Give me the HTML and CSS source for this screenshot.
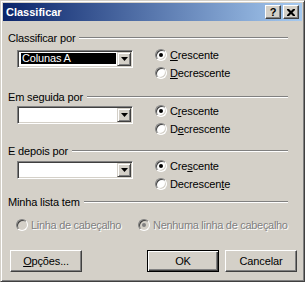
FILE: index.html
```html
<!DOCTYPE html>
<html lang="pt">
<head>
<meta charset="utf-8">
<title>Classificar</title>
<link rel="stylesheet" href="styles.css">
</head>
<body>
<div class="window">
  <div class="titlebar">
    <span class="title">Classificar</span>
    <div class="cap-btns">
      <div class="cap-btn help">?</div>
      <div class="cap-btn close">
        <svg width="8" height="7" viewBox="0 0 8 7"><path d="M0 0h2l2 2 2-2h2v1l-2.5 2.5 2.5 2.5v1h-2l-2-2-2 2h-2v-1l2.5-2.5-2.5-2.5z" fill="#000"/></svg>
      </div>
    </div>
  </div>
  <div class="content">
    <section class="group g1">
      <div class="legend"><span>Classificar por</span><i class="etch"></i></div>
      <div class="row">
        <div class="combo">
          <div class="field"><span class="sel">Colunas A</span></div>
          <div class="drop"><svg width="7" height="4" viewBox="0 0 7 4"><path d="M0 0h7l-3.5 4z" fill="#000"/></svg></div>
        </div>
        <div class="radios">
          <div class="radio"><span class="dot on"></span><span><u>C</u>rescente</span></div>
          <div class="radio"><span class="dot"></span><span><u>D</u>ecrescente</span></div>
        </div>
      </div>
    </section>
    <section class="group g2">
      <div class="legend"><span>Em seguida por</span><i class="etch"></i></div>
      <div class="row">
        <div class="combo">
          <div class="field"></div>
          <div class="drop"><svg width="7" height="4" viewBox="0 0 7 4"><path d="M0 0h7l-3.5 4z" fill="#000"/></svg></div>
        </div>
        <div class="radios">
          <div class="radio"><span class="dot on"></span><span>C<u>r</u>escente</span></div>
          <div class="radio"><span class="dot"></span><span>D<u>e</u>crescente</span></div>
        </div>
      </div>
    </section>
    <section class="group g3">
      <div class="legend"><span>E depois por</span><i class="etch"></i></div>
      <div class="row">
        <div class="combo">
          <div class="field"></div>
          <div class="drop"><svg width="7" height="4" viewBox="0 0 7 4"><path d="M0 0h7l-3.5 4z" fill="#000"/></svg></div>
        </div>
        <div class="radios">
          <div class="radio"><span class="dot on"></span><span>Cre<u>s</u>cente</span></div>
          <div class="radio"><span class="dot"></span><span>Decrescen<u>t</u>e</span></div>
        </div>
      </div>
    </section>
    <section class="group g4">
      <div class="legend"><span>Minha lista tem</span><i class="etch"></i></div>
      <div class="opts-row">
        <div class="radio disabled first"><span class="dot"></span><span>Linha de cabeçalho</span></div>
        <div class="radio disabled"><span class="dot on"></span><span>Nenhuma linha de cabeçalho</span></div>
      </div>
    </section>
    <div class="buttons">
      <div class="btn"><span><u>O</u>pções...</span></div>
      <div class="spacer"></div>
      <div class="btn default">OK</div>
      <div class="btn">Cancelar</div>
    </div>
  </div>
</div>
</body>
</html>
```
FILE: styles.css
```css
* { box-sizing: border-box; }
html, body { margin: 0; padding: 0; }
body {
  width: 305px;
  height: 282px;
  overflow: hidden;
  background: #D4D0C8;
  font: 11px "Liberation Sans", Arial, sans-serif;
  letter-spacing: -0.15px;
  color: #000;
}
u { text-decoration: underline; text-underline-offset: 1px; }

.window {
  width: 305px;
  height: 282px;
  border: 1px solid;
  border-color: #D4D0C8 #404040 #404040 #D4D0C8;
  box-shadow: inset 1px 1px #fff, inset -1px -1px #808080;
  padding: 2px;
  display: flex;
  flex-direction: column;
}

.titlebar {
  height: 18px;
  flex: none;
  background: linear-gradient(to right, #0A246A, #A6CAF0);
  display: flex;
  align-items: center;
  padding: 0 3px 0 3px;
}
.title {
  flex: 1;
  color: #fff;
  font-weight: bold;
  font-size: 11px;
  letter-spacing: 0;
}
.cap-btns { display: flex; gap: 2px; }
.cap-btn {
  width: 16px;
  height: 14px;
  background: #D4D0C8;
  border: 1px solid;
  border-color: #fff #404040 #404040 #fff;
  box-shadow: inset -1px -1px #808080;
  display: flex;
  align-items: center;
  justify-content: center;
  font-weight: bold;
  font-size: 11px;
  line-height: 12px;
}

.content {
  flex: 1;
  display: flex;
  flex-direction: column;
}

.legend {
  display: flex;
  align-items: center;
  height: 12px;
  padding: 0 14px 0 5px;
  gap: 4px;
}
.etch {
  flex: 1;
  height: 2px;
  border-top: 1px solid #808080;
  border-bottom: 1px solid #fff;
}
.g1 { margin-top: 11px; }
.g1 .row { margin-top: 3px; }
.g2 { margin-top: 10px; }
.g3 { margin-top: 8px; }
.g3 .row { margin-top: 1px; }
.g4 { margin-top: 4px; }

.row {
  display: flex;
  padding-left: 14px;
}
.combo {
  width: 116px;
  height: 18px;
  margin-top: 3px;
  border: 1px solid;
  border-color: #808080 #fff #fff #808080;
  box-shadow: inset 1px 1px #404040, inset -1px -1px #D4D0C8;
  background: #fff;
  padding: 1px;
  display: flex;
}
.field {
  flex: 1;
  padding: 1px 1px 1px 2px;
  display: flex;
}
.sel {
  flex: 1;
  height: 11px;
  line-height: 11px;
  background: #000;
  color: #fff;
  padding-left: 1px;
}
.drop {
  width: 14px;
  background: #D4D0C8;
  border: 1px solid;
  border-color: #D4D0C8 #404040 #404040 #D4D0C8;
  box-shadow: inset 1px 1px #fff, inset -1px -1px #808080;
  display: flex;
  align-items: center;
  justify-content: center;
}
.drop svg { display: block; }

.radios {
  margin-left: 22px;
  display: flex;
  flex-direction: column;
  gap: 2px;
}
.radio {
  height: 16px;
  display: flex;
  align-items: center;
  gap: 3px;
  white-space: nowrap;
}
.dot {
  width: 12px;
  height: 12px;
  flex: none;
  border-radius: 50%;
  background: #fff;
  border: 1px solid;
  border-color: #808080 #fff #fff #808080;
  box-shadow: inset 1px 1px #404040, inset -1px -1px #D4D0C8;
  display: flex;
  align-items: center;
  justify-content: center;
}
.dot.on::after {
  content: "";
  width: 4px;
  height: 4px;
  border-radius: 50%;
  background: #000;
}
.radio.disabled { color: #808080; text-shadow: 1px 1px 0 #fff; letter-spacing: -0.3px; }
.radio.disabled .dot { background: #D4D0C8; }
.radio.disabled .dot.on::after { background: #808080; }

.opts-row {
  display: flex;
  padding-left: 13px;
  margin-top: 9px;
}
.radio.first { width: 122px; }

.buttons {
  display: flex;
  margin-top: 17px;
  padding: 0 5px 0 7px;
  gap: 6px;
}
.spacer { flex: 1; }
.btn {
  width: 72px;
  height: 22px;
  background: #D4D0C8;
  border: 1px solid;
  border-color: #fff #404040 #404040 #fff;
  box-shadow: inset -1px -1px #808080;
  display: flex;
  align-items: center;
  justify-content: center;
}
.btn.default {
  border-color: #000;
  box-shadow: inset 1px 1px #fff, inset -1px -1px #404040, inset -2px -2px #808080;
}
```
